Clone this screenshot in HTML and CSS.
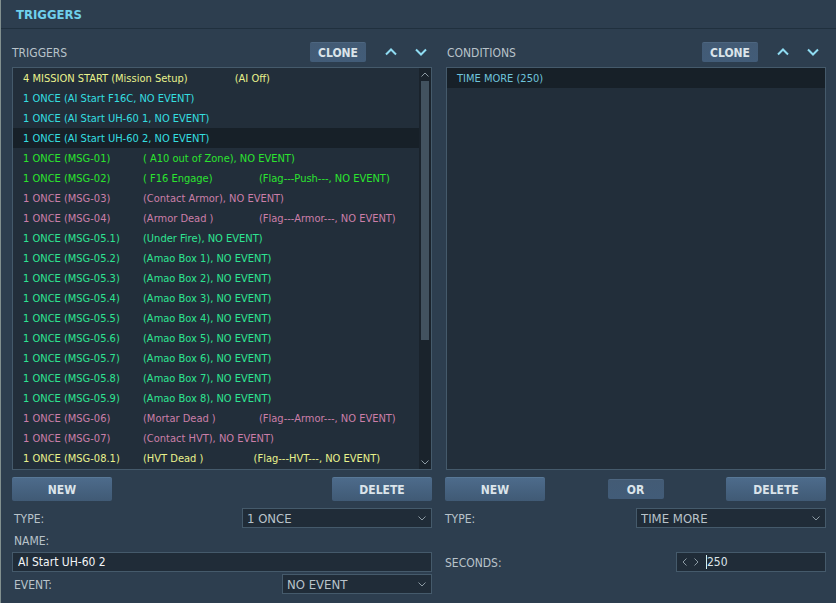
FILE: index.html
```html
<!DOCTYPE html>
<html lang="en">
<head>
  <meta charset="UTF-8">
  <meta name="viewport" content="width=device-width, initial-scale=1.0">
  <title>Triggers</title>
  <link rel="stylesheet" href="styles.css">
</head>
<body>
  <header class="title-bar">
    <h1>TRIGGERS</h1>
  </header>
  <main class="panels">
    <section class="panel">
      <div class="panel-head">
        <h2>TRIGGERS</h2>
        <button class="btn small" type="button">CLONE</button>
        <button class="arrow" type="button" aria-label="Move up">
          <svg width="12" height="8" viewBox="0 0 12 8"><path d="M1 6.5L6 1.5L11 6.5"/></svg>
        </button>
        <button class="arrow" type="button" aria-label="Move down">
          <svg width="12" height="8" viewBox="0 0 12 8"><path d="M1 1.5L6 6.5L11 1.5"/></svg>
        </button>
      </div>
      <div class="list-box">
        <ul class="list">
          <li class="yellow">4 MISSION START (Mission Setup)               (AI Off)</li>
          <li class="cyan">1 ONCE (AI Start F16C, NO EVENT)</li>
          <li class="cyan">1 ONCE (AI Start UH-60 1, NO EVENT)</li>
          <li class="cyan selected">1 ONCE (AI Start UH-60 2, NO EVENT)</li>
          <li class="green"><span class="id">1 ONCE (MSG-01)</span>( A10 out of Zone), NO EVENT)</li>
          <li class="green"><span class="id">1 ONCE (MSG-02)</span><span class="name">( F16 Engage)</span>(Flag---Push---, NO EVENT)</li>
          <li class="pink"><span class="id">1 ONCE (MSG-03)</span>(Contact Armor), NO EVENT)</li>
          <li class="pink"><span class="id">1 ONCE (MSG-04)</span><span class="name">(Armor Dead )</span>(Flag---Armor---, NO EVENT)</li>
          <li class="mint"><span class="id">1 ONCE (MSG-05.1)</span>(Under Fire), NO EVENT)</li>
          <li class="mint"><span class="id">1 ONCE (MSG-05.2)</span>(Amao Box 1), NO EVENT)</li>
          <li class="mint"><span class="id">1 ONCE (MSG-05.3)</span>(Amao Box 2), NO EVENT)</li>
          <li class="mint"><span class="id">1 ONCE (MSG-05.4)</span>(Amao Box 3), NO EVENT)</li>
          <li class="mint"><span class="id">1 ONCE (MSG-05.5)</span>(Amao Box 4), NO EVENT)</li>
          <li class="mint"><span class="id">1 ONCE (MSG-05.6)</span>(Amao Box 5), NO EVENT)</li>
          <li class="mint"><span class="id">1 ONCE (MSG-05.7)</span>(Amao Box 6), NO EVENT)</li>
          <li class="mint"><span class="id">1 ONCE (MSG-05.8)</span>(Amao Box 7), NO EVENT)</li>
          <li class="mint"><span class="id">1 ONCE (MSG-05.9)</span>(Amao Box 8), NO EVENT)</li>
          <li class="pink"><span class="id">1 ONCE (MSG-06)</span><span class="name">(Mortar Dead )</span>(Flag---Armor---, NO EVENT)</li>
          <li class="pink"><span class="id">1 ONCE (MSG-07)</span>(Contact HVT), NO EVENT)</li>
          <li class="yellow"><span class="id">1 ONCE (MSG-08.1)</span>(HVT Dead )                (Flag---HVT---, NO EVENT)</li>
        </ul>
        <div class="scrollbar">
          <svg width="8" height="5" viewBox="0 0 8 5"><path d="M.5 4.5L4 1L7.5 4.5"/></svg>
          <div class="track"><div class="thumb"></div></div>
          <svg width="8" height="5" viewBox="0 0 8 5"><path d="M.5 .5L4 4L7.5 .5"/></svg>
        </div>
      </div>
      <div class="actions">
        <button class="btn" type="button">NEW</button>
        <button class="btn" type="button">DELETE</button>
      </div>
      <form class="form">
        <div class="row">
          <label for="trigger-type">TYPE:</label>
          <div class="select wide">
            <select id="trigger-type"><option>1 ONCE</option></select>
            <svg width="8" height="5" viewBox="0 0 8 5"><path d="M.5 .5L4 4L7.5 .5"/></svg>
          </div>
        </div>
        <div class="row">
          <label for="trigger-name">NAME:</label>
        </div>
        <div class="row">
          <input class="field" id="trigger-name" type="text" value="AI Start UH-60 2">
        </div>
        <div class="row">
          <label for="trigger-event">EVENT:</label>
          <div class="select">
            <select id="trigger-event"><option>NO EVENT</option></select>
            <svg width="8" height="5" viewBox="0 0 8 5"><path d="M.5 .5L4 4L7.5 .5"/></svg>
          </div>
        </div>
      </form>
    </section>

    <section class="panel conditions">
      <div class="panel-head">
        <h2>CONDITIONS</h2>
        <button class="btn small" type="button">CLONE</button>
        <button class="arrow" type="button" aria-label="Move up">
          <svg width="12" height="8" viewBox="0 0 12 8"><path d="M1 6.5L6 1.5L11 6.5"/></svg>
        </button>
        <button class="arrow" type="button" aria-label="Move down">
          <svg width="12" height="8" viewBox="0 0 12 8"><path d="M1 1.5L6 6.5L11 1.5"/></svg>
        </button>
      </div>
      <div class="list-box">
        <ul class="list">
          <li class="blue selected">TIME MORE (250)</li>
        </ul>
      </div>
      <div class="actions">
        <button class="btn" type="button">NEW</button>
        <button class="btn small" type="button">OR</button>
        <button class="btn" type="button">DELETE</button>
      </div>
      <form class="form">
        <div class="row">
          <label for="condition-type">TYPE:</label>
          <div class="select wide">
            <select id="condition-type"><option>TIME MORE</option></select>
            <svg width="8" height="5" viewBox="0 0 8 5"><path d="M.5 .5L4 4L7.5 .5"/></svg>
          </div>
        </div>
        <div class="row"></div>
        <div class="row">
          <label for="seconds">SECONDS:</label>
          <div class="spinner">
            <button type="button" aria-label="Decrease">
              <svg width="5" height="8" viewBox="0 0 5 8"><path d="M4.5 .5L1 4L4.5 7.5"/></svg>
            </button>
            <button type="button" aria-label="Increase">
              <svg width="5" height="8" viewBox="0 0 5 8"><path d="M.5 .5L4 4L.5 7.5"/></svg>
            </button>
            <span class="caret"></span>
            <input id="seconds" type="text" value="250">
          </div>
        </div>
      </form>
    </section>
  </main>
</body>
</html>
```
FILE: styles.css
```css
* {
  box-sizing: border-box;
  margin: 0;
  padding: 0;
}
body {
  min-height: 100vh;
  border-left: 1px solid #82908f;
  background: #2d3e4f;
  color: #b9c3ca;
  font-family: "DejaVu Sans Condensed", "DejaVu Sans", sans-serif;
  font-size: 12px;
}
button, input, select {
  font: inherit;
  color: inherit;
  border: 0;
  outline: 0;
}
svg {
  display: block;
  flex: none;
  fill: none;
  stroke: #8c9aa3;
}

.title-bar {
  height: 29px;
  padding-left: 15px;
  border-bottom: 1px solid #20303e;
}
.title-bar h1 {
  color: #6fd0ec;
  font-size: 13px;
  line-height: 30px;
}

.panels {
  display: grid;
  grid-template-columns: 420fr 381fr;
  gap: 13px;
  padding: 13px 10px 0 11px;
}
.panel-head {
  display: flex;
  align-items: center;
  height: 20px;
  margin-bottom: 5px;
}
.panel-head h2 {
  flex: 1;
  height: 20px;
  font-size: 12px;
  font-weight: normal;
  line-height: 22px;
}
.btn {
  width: 100px;
  height: 24px;
  border-radius: 2px;
  border-top: 1px solid #587897;
  background: linear-gradient(#4d6b8b, #405a75);
  color: #dbe4ea;
  font-weight: bold;
}
.btn.small {
  width: 56px;
  height: 20px;
  border-top-color: #4d6680;
  background: linear-gradient(#435b75, #425c78);
}
.arrow {
  display: flex;
  justify-content: center;
  width: 30px;
  background: none;
}
.panel-head .btn {
  margin-right: 10px;
}
.arrow:last-child {
  margin-right: -4px;
}
.arrow svg {
  stroke: #8fdcf2;
  stroke-width: 2;
}

.list-box {
  display: flex;
  height: 403px;
  border: 1px solid #455a6b;
  background: #222e3a;
}
.list {
  flex: 1;
  list-style: none;
  font-size: 11px;
  line-height: 22px;
}
.list li {
  height: 20px;
  padding-left: 10px;
  white-space: pre;
}
.list .selected {
  background: #172028;
}
.id {
  display: inline-block;
  width: 120px;
}
.name {
  display: inline-block;
  width: 116px;
}
.yellow { color: #e9f28c; }
.cyan { color: #35dfe0; }
.green { color: #2be42f; }
.pink { color: #cb7fa9; }
.mint { color: #2ee592; }
.blue { color: #6fc4dc; }

.scrollbar {
  display: flex;
  flex-direction: column;
  align-items: center;
  width: 12px;
  padding: 4px 0;
  background: #1a232c;
}
.track {
  flex: 1;
  width: 8px;
  margin: 4px 0;
}
.thumb {
  height: 69%;
  background: #42525f;
}

.actions {
  display: flex;
  align-items: center;
  justify-content: space-between;
  margin: 7px 0;
}
.row {
  display: flex;
  align-items: center;
  justify-content: space-between;
  height: 20px;
  margin-bottom: 2px;
}
.row label {
  height: 20px;
  padding-left: 2px;
  line-height: 22px;
}
.select {
  display: flex;
  align-items: center;
  width: 150px;
  height: 20px;
  padding-right: 5px;
  border: 1px solid #455a6b;
  background: #202c38;
}
.select.wide {
  width: 190px;
}
.select select {
  flex: 1;
  padding-left: 4px;
  appearance: none;
  background: none;
  font-size: 13px;
}
.field {
  width: 100%;
  height: 20px;
  padding-left: 5px;
  border: 1px solid #455a6b;
  background: #202c38;
  color: #f2f5f7;
}
.spinner {
  display: flex;
  align-items: center;
  width: 150px;
  height: 20px;
  padding-left: 5px;
  border: 1px solid #455a6b;
  background: #202c38;
  color: #dbe4ea;
}
.spinner button {
  width: 12px;
  background: none;
}
.caret {
  width: 1px;
  height: 14px;
  background: #d6f2f0;
}
.spinner input {
  flex: 1;
  min-width: 0;
  background: none;
}

.conditions .panel-head {
  padding: 0 2px;
}
.conditions .list-box {
  margin-left: 1px;
}
.conditions .row label {
  padding-left: 0;
}
```
